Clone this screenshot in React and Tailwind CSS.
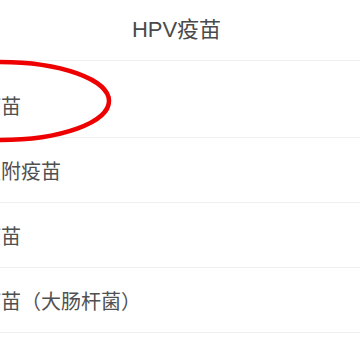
import React from "react";

const rows = [
  { text: "疫苗" },
  { text: "吸附疫苗" },
  { text: "疫苗" },
  { text: "疫苗（大肠杆菌）" },
];

export default function App() {
  return (
    <div className="relative w-[360px] h-[360px] overflow-hidden bg-white" style={{ fontFamily: '"Liberation Sans", "Noto Sans CJK SC", sans-serif' }}>
      <div className="h-[61px] border-b border-[#efefef] flex items-center justify-center">
        <span className="text-[22px] text-[#4a4a4a] pr-[7px] pb-[2px]">HPV疫苗</span>
      </div>
      <div className="pt-[12px]">
        {rows.map((r, i) => (
          <div key={i} className="h-[65px] border-b border-[#efefef] flex items-center overflow-hidden">
            <span className="ml-[-19px] whitespace-nowrap text-[20px] leading-none text-[#505050] pt-[1px]" style={{ fontFamily: '"Noto Sans CJK SC", sans-serif' }}>
              {r.text}
            </span>
          </div>
        ))}
      </div>
      <svg className="absolute left-0 top-0 pointer-events-none" width="360" height="360" viewBox="0 0 360 360">
        <ellipse cx="0" cy="101" rx="109" ry="39" fill="none" stroke="#ee0000" strokeWidth="4.5" />
      </svg>
    </div>
  );
}
